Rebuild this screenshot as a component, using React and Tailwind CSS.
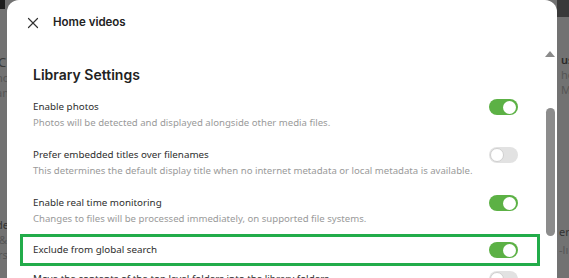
import { X } from "lucide-react";

const rows = [
  {
    label: "Enable photos",
    desc: "Photos will be detected and displayed alongside other media files.",
    on: true,
  },
  {
    label: "Prefer embedded titles over filenames",
    desc: "This determines the default display title when no internet metadata or local metadata is available.",
    on: false,
  },
  {
    label: "Enable real time monitoring",
    desc: "Changes to files will be processed immediately, on supported file systems.",
    on: true,
  },
];

function Toggle({ on }) {
  return (
    <div
      className={
        on
          ? "flex h-[16px] w-[29px] shrink-0 items-center justify-end rounded-full bg-[#5cb145] px-[2px]"
          : "flex h-[16px] w-[29px] shrink-0 items-center justify-start rounded-full bg-[#e2e2e2] px-[1px]"
      }
    >
      <div
        className={
          on
            ? "h-[13px] w-[13px] rounded-full bg-white"
            : "h-[14px] w-[14px] rounded-full border border-[#cfcfcf] bg-white"
        }
      ></div>
    </div>
  );
}

export default function App() {
  return (
    <div className="flex h-[278px] w-[569px] overflow-hidden bg-[#727272] font-['Noto_Sans',sans-serif]">
      {/* page behind, left */}
      <div className="flex w-[7px] shrink-0 flex-col overflow-hidden text-[11px] leading-[15px] text-[#3a3a3a]">
        <div className="h-[9px] w-[5px] bg-[#1e1e1e]"></div>
        <div className="mt-[46px] -ml-[2px] text-[13px]">C</div>
        <div className="-ml-[4px] text-[#555]">no</div>
        <div className="-ml-[4px] text-[#555]">an</div>
        <div className="mt-[117px] -ml-[4px] text-[#333]">de</div>
        <div className="-ml-[1px] text-[#555]">&amp;</div>
        <div className="-ml-[2px] text-[#555]">rs</div>
      </div>

      {/* dialog */}
      <div className="flex w-[550px] shrink-0 flex-col rounded-t-[12px] bg-white">
        <div className="flex h-[45px] shrink-0 items-center gap-[11px] pl-[17px]">
          <X size={18} strokeWidth={1.6} className="text-[#333]" />
          <span className="font-['Inter',sans-serif] text-[11.5px] font-semibold text-[#222]">
            Home videos
          </span>
        </div>

        <div className="flex min-h-0 flex-1">
          <div className="flex-1 overflow-hidden pl-[26px] pr-[27px] pt-[20px]">
            <h2 className="mb-[14px] font-['Inter',sans-serif] text-[14px] font-semibold leading-[20px] text-[#222]">
              Library Settings
            </h2>

            <div className="flex flex-col gap-[17px]">
              {rows.map((r) => (
                <div key={r.label} className="flex items-start justify-between">
                  <div className="whitespace-nowrap">
                    <div className="text-[9.8px] leading-[16px] text-[#2e2e2e]">{r.label}</div>
                    <div className="text-[9.6px] leading-[15px] text-[#9a9a9a]">{r.desc}</div>
                  </div>
                  <Toggle on={r.on} />
                </div>
              ))}

              <div className="-mt-[9px] -ml-[13px] -mr-[22px] flex items-center justify-between border-[3px] border-[#22ac4a] py-[5px] pl-[10px] pr-[19px]">
                <div className="text-[9.8px] leading-[16px] text-[#2e2e2e]">Exclude from global search</div>
                <Toggle on={true} />
              </div>

              <div className="-mt-[12px] flex items-start justify-between">
                <div className="whitespace-nowrap text-[9.8px] leading-[16px] text-[#2e2e2e]">
                  Move the contents of the top level folders into the library folders
                </div>
                <Toggle on={false} />
              </div>
            </div>
          </div>

          {/* scrollbar */}
          <div className="flex w-[12px] shrink-0 flex-col items-center pr-[2px]">
            <svg width="10" height="6" viewBox="0 0 10 6" className="mt-[6px]">
              <polygon points="5,0 10,6 0,6" fill="#8a8a8a" />
            </svg>
            <div className="mt-[51px] h-[128px] w-[9px] rounded-full bg-[#8c8c8c]"></div>
          </div>
        </div>
      </div>

      {/* page behind, right */}
      <div className="flex flex-1 flex-col overflow-hidden text-[11px] leading-[15px] text-[#333]">
        <div className="h-[17px] bg-[#3a3a3a]"></div>
        <div className="mt-[35px] pl-[4px] font-semibold text-[#2a2a2a]">us</div>
        <div className="pl-[4px] text-[#555]">ho</div>
        <div className="pl-[4px] text-[#555]">M</div>
        <div className="mt-[127px] pl-[2px] text-[#333]">ert</div>
        <div className="mt-[3px] pl-[2px] text-[#555]">-lı</div>
      </div>
    </div>
  );
}
